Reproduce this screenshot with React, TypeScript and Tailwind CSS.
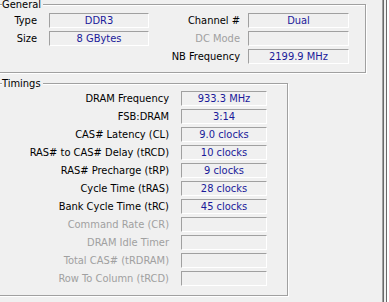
import React from "react";

const F = { fontFamily: '"DejaVu Sans Condensed", "DejaVu Sans", sans-serif' };

function Box({ value, w }: { value?: string; w: string }) {
  return (
    <div
      className={`${w} h-[15px] border-t border-l border-[#a0a0a0] border-b border-r border-b-white border-r-white flex items-center justify-center text-[#1a1a9a] leading-none`}
    >
      {value}
    </div>
  );
}

function GRow({
  l1,
  v1,
  d1,
  l2,
  v2,
  d2,
}: {
  l1?: string;
  v1?: string;
  d1?: boolean;
  l2: string;
  v2?: string;
  d2?: boolean;
}) {
  return (
    <div className="flex items-center h-[15px]">
      <div className={`w-[39px] text-right leading-none ${d1 ? "text-[#a0a0a0]" : "text-black"}`}>{l1}</div>
      <div className="ml-[12px] w-[100px]">{l1 ? <Box value={v1} w="w-[100px]" /> : null}</div>
      <div className={`w-[91px] text-right leading-none ${d2 ? "text-[#a0a0a0]" : "text-black"}`}>{l2}</div>
      <div className="ml-[8px]">
        <Box value={v2} w="w-[101px]" />
      </div>
    </div>
  );
}

const timings: [string, string, boolean][] = [
  ["DRAM Frequency", "933.3 MHz", false],
  ["FSB:DRAM", "3:14", false],
  ["CAS# Latency (CL)", "9.0 clocks", false],
  ["RAS# to CAS# Delay (tRCD)", "10 clocks", false],
  ["RAS# Precharge (tRP)", "9 clocks", false],
  ["Cycle Time (tRAS)", "28 clocks", false],
  ["Bank Cycle Time (tRC)", "45 clocks", false],
  ["Command Rate (CR)", "", true],
  ["DRAM Idle Timer", "", true],
  ["Total CAS# (tRDRAM)", "", true],
  ["Row To Column (tRCD)", "", true],
];

export default function App() {
  return (
    <div className="w-[389px] h-[302px] bg-[#f0f0f0] flex overflow-hidden text-[11px]" style={F}>
      <div className="w-[382px] flex flex-col pt-[4px]">
        <div className="relative ml-[-3px] w-[369px] h-[69px] border border-[#a0a0a0] shadow-[1px_1px_0_#fff,inset_1px_1px_0_#fff] pt-[8px] flex flex-col gap-[3px]">
          <div className="absolute left-[4px] top-[-7px] pr-[2px] bg-[#f0f0f0] leading-[13px] text-black">General</div>
          <GRow l1="Type" v1="DDR3" l2="Channel #" v2="Dual" />
          <GRow l1="Size" v1="8 GBytes" l2="DC Mode" d2 />
          <GRow l2="NB Frequency" v2="2199.9 MHz" />
        </div>
        <div className="relative mt-[10px] ml-[-3px] w-[291px] h-[213px] border border-[#a0a0a0] shadow-[1px_1px_0_#fff,inset_1px_1px_0_#fff] pt-[7px] flex flex-col gap-[3px]">
          <div className="absolute left-[4px] top-[-7px] pr-[2px] bg-[#f0f0f0] leading-[13px] text-black">Timings</div>
          {timings.map(([l, v, d]) => (
            <div key={l} className="flex items-center h-[15px]">
              <div className={`w-[171px] text-right leading-none whitespace-nowrap ${d ? "text-[#a0a0a0]" : "text-black"}`}>{l}</div>
              <div className="ml-[12px]">
                <Box value={v} w="w-[86px]" />
              </div>
            </div>
          ))}
        </div>
      </div>
      <div className="w-[1px] h-full bg-[#a0a0a0]" />
      <div className="w-[1px] h-full bg-[#696969]" />
      <div className="w-[2px] h-full bg-[#f0f0f0]" />
      <div className="w-[1px] h-full bg-[#696969]" />
      <div className="w-[2px] h-full bg-[#ffffff]" />
    </div>
  );
}
